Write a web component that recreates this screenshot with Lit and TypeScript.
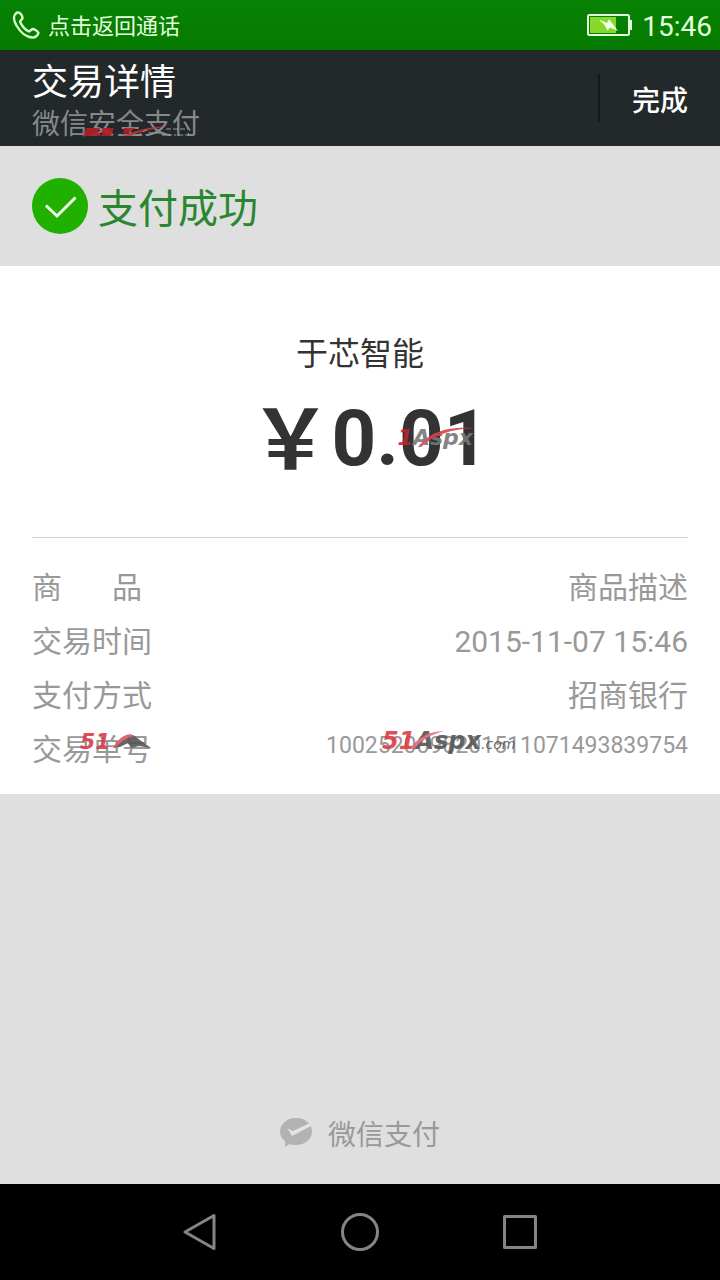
import { LitElement, html, css } from "lit";
import { customElement } from "lit/decorators.js";

@customElement("app-root")
export class AppRoot extends LitElement {
  static styles = css`
    :host {
      display: flex;
      flex-direction: column;
      min-height: 100vh;
      background: #dfdfdf;
      font-family: Roboto, "Noto Sans CJK SC", sans-serif;
      color: #999;
    }
    * { box-sizing: border-box; }
    svg { display: block; flex: none; }
    button, h1, h2, p, dl, dd, dt { margin: 0; padding: 0; font: inherit; }
    button { border: 0; background: none; color: inherit; cursor: pointer; }
    .status {
      display: flex;
      align-items: center;
      justify-content: space-between;
      height: 50px;
      padding: 0 8px 0 12px;
      background: linear-gradient(#078205, #067a00);
      color: #e4ffdc;
    }
    .call { display: flex; align-items: center; gap: 8px; font-size: 22px; line-height: 32px; }
    .call span, .power span { padding-top: 4px; }
    .power { display: flex; align-items: center; gap: 10px; font-size: 28px; line-height: 46px; }
    .bar {
      display: flex;
      align-items: center;
      justify-content: space-between;
      height: 96px;
      padding-left: 32px;
      background: #23282a;
    }
    .heading { padding-top: 6px; }
    .title { font-size: 36px; line-height: 48px; color: #fff; font-weight: 400; }
    .sub { position: relative; font-size: 28px; line-height: 36px; color: #85898a; }
    .done {
      height: 48px;
      padding: 8px 32px 0;
      border-left: 2px solid #15191a;
      font-size: 28px;
      line-height: 40px;
      color: #fff;
      font-weight: 500;
    }
    .result {
      display: flex;
      align-items: center;
      gap: 10px;
      height: 120px;
      padding: 0 32px;
      font-size: 40px;
      line-height: 56px;
      color: #2a862f;
    }
    .result span { padding-top: 8px; }
    .sheet { padding: 64px 32px 17px; background: #fff; }
    .payee { font-size: 32px; line-height: 48px; color: #333; text-align: center; }
    .amount {
      display: flex;
      align-items: flex-start;
      justify-content: center;
      padding: 0 0 37px 18px;
      border-bottom: 1px solid #d2d2d2;
      font-size: 78px;
      line-height: 122px;
      font-weight: 700;
      color: #333;
    }
    .yen { font-size: 82px; line-height: 112px; font-weight: 700; font-family: "Noto Sans CJK SC", sans-serif; }
    .digits { position: relative; }
    .rows { padding-top: 23px; font-size: 30px; line-height: 54px; }
    .row { display: flex; justify-content: space-between; }
    .row dt, .row dd { position: relative; }
    .spread { display: flex; gap: 50px; }
    .number { font-size: 23px; line-height: 46px; }
    .mark {
      position: absolute;
      display: flex;
      align-items: baseline;
      font: italic 700 24px/24px "DejaVu Sans", sans-serif;
      color: #555;
      white-space: nowrap;
      opacity: 0.9;
    }
    .red { color: #dc3c48; }
    .com { font-size: 14px; font-weight: 400; }
    .mark-sub { left: 50px; top: 19px; }
    .mark-sum { left: 66px; top: 48px; font-size: 22px; color: #777; }
    .mark-sum .red { color: #c4202c; }
    .swoosh { position: absolute; left: 20px; top: 0; }
    .mark-label { left: 48px; top: 7px; font-size: 22px; }
    .mark-no { left: 56px; top: 6px; }
    .brand {
      display: flex;
      flex: 1;
      align-items: flex-end;
      justify-content: center;
      gap: 16px;
      padding-bottom: 28px;
      font-size: 28px;
      line-height: 40px;
    }
    .brand svg { margin-bottom: 8px; }
    .nav {
      display: flex;
      align-items: center;
      justify-content: center;
      gap: 120px;
      height: 96px;
      background: #000;
    }
    .nav svg { fill: none; stroke: #858585; stroke-width: 3; stroke-linejoin: round; }
  `;

  render() {
    return html`
      <header>
        <div class="status">
          <button class="call">
            <svg width="28" height="28" viewBox="0 0 28 28" fill="none" stroke="#d5ffca" stroke-width="2.4" stroke-linejoin="round">
              <path d="M5 1.500 C1.500 4 1 9 4.500 14.500 C8 20.500 14 26 20 26.500 C23 26.700 25.500 24.500 26.500 22 C25.500 20 22.500 18 20.500 18 L17 20.500 C13 18.500 9.500 14.500 8 10.500 L10.500 7.500 C10.500 4.500 8.500 1 5 1.500 Z"/>
            </svg>
            <span>点击返回通话</span>
          </button>
          <div class="power">
            <svg width="45" height="24" viewBox="0 0 45 24">
              <rect x="1" y="2" width="41" height="20" rx="1.500" fill="none" stroke="#e4ffdc" stroke-width="2"/>
              <path d="M42.500 7h2.500v10h-2.500z" fill="#e4ffdc"/>
              <path d="M3 4h26v16H3z" fill="#86d82c"/>
              <path d="M12 6.500 L20 10 L22 6 L26 11.500 L31 18 L23 14.500 L20.500 17.500 L17.500 12 Z" fill="#f2ffe8"/>
            </svg>
            <span>15:46</span>
          </div>
        </div>
        <div class="bar">
          <div class="heading">
            <h1 class="title">交易详情</h1>
            <p class="sub">微信安全支付
              <svg class="mark mark-sub" width="112" height="12" viewBox="0 0 112 12">
                <path d="M4 2H18L16 6L20 10H1Z M20 2H32L29 10H20Z M42 2H54L48 6L40 10H41Z" fill="#b32029"/>
                <path d="M42 10 C54 4 66 1 86 0 C70 3 60 5 48 10" fill="#c8303a"/>
                <path d="M55 10 L64 4 L68 7 H78 L80 9 H90 M84 3 H108 L106 9 H92" fill="none" stroke="#a5a8a8" stroke-width="1" stroke-dasharray="5 2"/>
              </svg>
            </p>
          </div>
          <button class="done">完成</button>
        </div>
      </header>
      <div class="result">
        <svg width="56" height="56" viewBox="0 0 56 56">
          <circle cx="28" cy="28" r="28" fill="#20b000"/>
          <path d="M14 27.500 L25 38 L43.500 19.500" fill="none" stroke="#f0ffe8" stroke-width="3"/>
        </svg>
        <span>支付成功</span>
      </div>
      <main class="sheet">
        <h2 class="payee">于芯智能</h2>
        <p class="amount">
          <span class="yen">￥</span><span class="digits">0.01<span class="mark mark-sum"><span class="red">1</span>Aspx<svg class="swoosh" width="58" height="22" viewBox="0 0 58 22"><path d="M0 21 C12 6 28 0 57 2 C32 3 16 9 3 21Z" fill="#d8404a"/></svg></span></span>
        </p>
        <dl class="rows">
          <div class="row"><dt class="spread"><span>商</span><span>品</span></dt><dd>商品描述</dd></div>
          <div class="row"><dt>交易时间</dt><dd>2015-11-07 15:46</dd></div>
          <div class="row"><dt>支付方式</dt><dd>招商银行</dd></div>
          <div class="row">
            <dt>交易单号<span class="mark mark-label"><span class="red">51</span><svg width="42" height="16" viewBox="0 0 42 16"><path d="M2 15 L14 3 L22 2 L40 15 L28 13 L20 15 L17 10 L9 14Z" fill="#555"/><path d="M2 15 C7 6 12 2 20 1 L23 4 C15 4 9 9 5 15Z" fill="#dc5560"/></svg></span></dt>
            <dd class="number">1002520098201511071493839754<span class="mark mark-no"><span class="red">51</span>Aspx<span class="com">.com</span><svg class="swoosh" width="58" height="22" viewBox="0 0 58 22"><path d="M8 20 C16 8 26 3 42 2 C30 5 20 10 12 20Z" fill="#e06a72"/></svg></span></dd>
          </div>
        </dl>
      </main>
      <div class="brand">
        <svg width="32" height="30" viewBox="0 0 32 30">
          <path d="M16 0 C25 0 32 6 32 13.500 C32 21 25 27 16 27 C13.500 27 11.500 26.600 9.500 26 L5 29 L5.500 23.500 C2 21 0 17.500 0 13.500 C0 6 7 0 16 0Z" fill="#b2b2b2"/>
          <path d="M7.500 10.500 L12 18 L31 8 L29 5.500 L13 13 Z" fill="#e4e4e4"/>
        </svg>
        <span>微信支付</span>
      </div>
      <nav class="nav">
        <button aria-label="Back"><svg width="40" height="40" viewBox="0 0 40 40"><path d="M5 20 L34 3.500 V36.500 Z"/></svg></button>
        <button aria-label="Home"><svg width="40" height="40" viewBox="0 0 40 40"><circle cx="20" cy="20" r="17.500"/></svg></button>
        <button aria-label="Recent apps"><svg width="40" height="40" viewBox="0 0 40 40"><rect x="4.500" y="4.500" width="31" height="31"/></svg></button>
      </nav>
    `;
  }
}
